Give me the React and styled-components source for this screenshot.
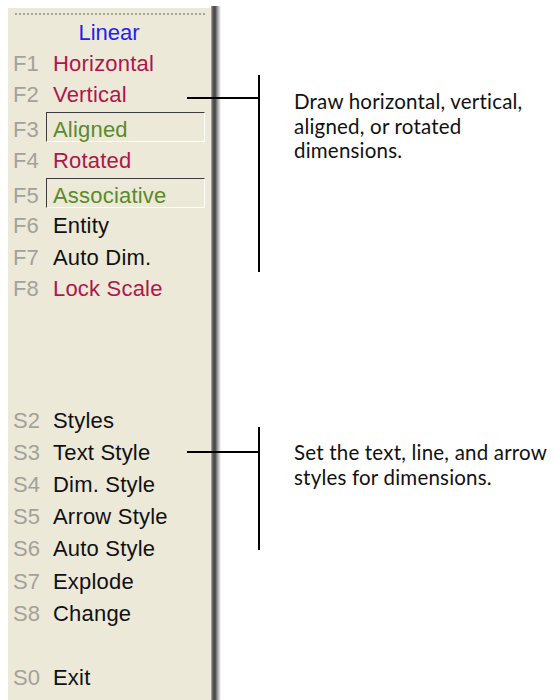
import React from "react";
import styled, { createGlobalStyle } from "styled-components";

const Global = createGlobalStyle`
  html, body { margin: 0; padding: 0; background: #ffffff; }
  body { font-family: "Liberation Sans", Arial, sans-serif; }
`;

const Page = styled.div`
  display: flex;
  align-items: stretch;
  min-height: 700px;
  height: 700px;
  overflow: hidden;
`;

const Panel = styled.div`
  flex: 0 0 202px;
  margin: 8px 0 0 8px;
  padding: 5px 6px 0 5px;
  box-sizing: border-box;
  background: #ece9d8;
  display: flex;
  flex-direction: column;
`;

const Edge = styled.div`
  flex: 0 0 10px;
  margin-top: 6px;
  background: linear-gradient(
    to right,
    #b8b6ac 0px,
    #6a6a66 1.5px,
    #444444 3px,
    #555555 4.5px,
    #8a8a8a 6px,
    #c8c8c8 8px,
    #ffffff 10px
  );
`;

const Grip = styled.div`
  height: 2px;
  margin: 0 0 0 2px;
  width: 190px;
  background: repeating-linear-gradient(
    to right,
    #a4a49c 0px,
    #a4a49c 2px,
    transparent 2px,
    transparent 4px
  );
`;

const Title = styled.div`
  margin-top: 4px;
  height: 28px;
  line-height: 28px;
  text-align: center;
  font-size: 22px;
  color: #2222f0;
`;

const Section = styled.div`
  display: flex;
  flex-direction: column;
  margin-top: ${(p) => p.$top}px;
`;

const Row = styled.div`
  display: flex;
  align-items: center;
  height: ${(p) => p.$h}px;
  font-size: 22px;
`;

const BoxRow = styled.div`
  display: flex;
  align-items: flex-start;
  height: 34px;
  padding-top: 1px;
  box-sizing: border-box;
  font-size: 22px;
`;

const Key = styled.span`
  flex: 0 0 40px;
  color: #a2a29a;
  line-height: ${(p) => p.$lh || 28}px;
  padding-top: ${(p) => p.$pt || 0}px;
`;

const colors = {
  red: "#b01648",
  green: "#5b8a2c",
  black: "#111111",
};

const Label = styled.span`
  color: ${(p) => colors[p.$tone]};
  letter-spacing: 0.2px;
  white-space: nowrap;
`;

const Sunken = styled.div`
  flex: 1;
  height: 30px;
  box-sizing: border-box;
  margin-left: -7px;
  padding: 4px 0 0 6px;
  line-height: 25px;
  border-top: 1px solid #3c3c3c;
  border-left: 1px solid #3c3c3c;
  border-bottom: 1px solid #ffffff;
  border-right: 1px solid #ffffff;
  color: ${(p) => colors[p.$tone]};
  letter-spacing: 0.2px;
  white-space: nowrap;
`;

const Notes = styled.div`
  flex: 1;
  display: flex;
  flex-direction: column;
  padding-top: 75px;
`;

const Callout = styled.div`
  display: flex;
  margin-left: -34px;
  margin-top: ${(p) => p.$top}px;
`;

const Connector = styled.div`
  flex: 0 0 73px;
  height: ${(p) => p.$h}px;
  box-sizing: border-box;
  border-right: 2px solid #000;
`;

const Tick = styled.div`
  height: 2px;
  margin-top: ${(p) => p.$at}px;
  background: #000;
`;

const Note = styled.p`
  margin: ${(p) => p.$top}px 0 0 34px;
  font-family: Lato, "Liberation Sans", sans-serif;
  font-size: 20.5px;
  letter-spacing: 0.2px;
  line-height: 24.5px;
  color: #111;
  white-space: pre-line;
`;

const fRows = [
  { k: "F1", t: "Horizontal", tone: "red" },
  { k: "F2", t: "Vertical", tone: "red" },
  { k: "F3", t: "Aligned", tone: "green", boxed: true },
  { k: "F4", t: "Rotated", tone: "red" },
  { k: "F5", t: "Associative", tone: "green", boxed: true },
  { k: "F6", t: "Entity", tone: "black" },
  { k: "F7", t: "Auto Dim.", tone: "black" },
  { k: "F8", t: "Lock Scale", tone: "red" },
];

const sRows = [
  { k: "S2", t: "Styles" },
  { k: "S3", t: "Text Style" },
  { k: "S4", t: "Dim. Style" },
  { k: "S5", t: "Arrow Style" },
  { k: "S6", t: "Auto Style" },
  { k: "S7", t: "Explode" },
  { k: "S8", t: "Change" },
  { k: "", t: "" },
  { k: "S0", t: "Exit" },
];

export default function App() {
  return (
    <>
      <Global />
      <Page>
        <Panel>
          <Grip />
          <Title>Linear</Title>
          <Section $top={1}>
            {fRows.map((r) =>
              r.boxed ? (
                <BoxRow key={r.k}>
                  <Key $lh={25} $pt={5}>{r.k}</Key>
                  <Sunken $tone={r.tone}>{r.t}</Sunken>
                </BoxRow>
              ) : (
                <Row key={r.k} $h={31.5}>
                  <Key>{r.k}</Key>
                  <Label $tone={r.tone}>{r.t}</Label>
                </Row>
              )
            )}
          </Section>
          <Section $top={99.6}>
            {sRows.map((r, i) => (
              <Row key={i} $h={32.2}>
                <Key>{r.k}</Key>
                <Label $tone="black">{r.t}</Label>
              </Row>
            ))}
          </Section>
        </Panel>
        <Edge />
        <Notes>
          <Callout $top={0}>
            <Connector $h={197}>
              <Tick $at={22} />
            </Connector>
            <Note $top={14}>
              {"Draw horizontal, vertical,\naligned, or rotated\ndimensions."}
            </Note>
          </Callout>
          <Callout $top={155}>
            <Connector $h={123}>
              <Tick $at={24} />
            </Connector>
            <Note $top={13}>
              {"Set the text, line, and arrow\nstyles for dimensions."}
            </Note>
          </Callout>
        </Notes>
      </Page>
    </>
  );
}
